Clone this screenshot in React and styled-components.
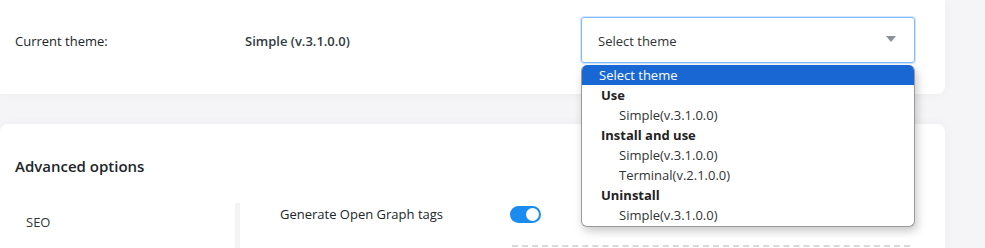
import React from 'react';
import styled, { createGlobalStyle } from 'styled-components';

const GlobalStyle = createGlobalStyle`
  html, body {
    margin: 0;
    padding: 0;
    background: #f5f5f7;
    font-family: "Open Sans", "Noto Sans", sans-serif;
    color: #212529;
  }
`;

const themeGroups = [
  { label: 'Use', items: ['Simple(v.3.1.0.0)'] },
  { label: 'Install and use', items: ['Simple(v.3.1.0.0)', 'Terminal(v.2.1.0.0)'] },
  { label: 'Uninstall', items: ['Simple(v.3.1.0.0)'] },
];

const App = () => {
  return (
    <>
      <GlobalStyle />
      <Page>
        <Main>
          <Card $top>
            <ThemeRow>
              <Label>Current theme:</Label>
              <CurrentValue>Simple (v.3.1.0.0)</CurrentValue>
              <SelectWrap>
                <SelectBox>
                  <span>Select theme</span>
                  <Caret />
                </SelectBox>
                <Menu>
                  <Option $active>Select theme</Option>
                  {themeGroups.map(g => (
                    <React.Fragment key={g.label}>
                      <GroupLabel>{g.label}</GroupLabel>
                      {g.items.map((it, i) => (
                        <Option key={i} $indent>{it}</Option>
                      ))}
                    </React.Fragment>
                  ))}
                </Menu>
              </SelectWrap>
            </ThemeRow>
          </Card>

          <Card>
            <SectionTitle>Advanced options</SectionTitle>
            <Split>
              <SideNav>
                <NavItem>SEO</NavItem>
              </SideNav>
              <Content>
                <SettingRow>
                  <SettingLabel>Generate Open Graph tags</SettingLabel>
                  <Toggle><Knob /></Toggle>
                </SettingRow>
                <Dashed />
              </Content>
            </Split>
          </Card>
        </Main>
        <Aside />
      </Page>
    </>
  );
};

const Page = styled.div`
  display: grid;
  grid-template-columns: 945px 1fr;
  height: 248px;
  overflow: hidden;
`;

const Main = styled.div`
  display: flex;
  flex-direction: column;
  gap: 30px;
`;

const Aside = styled.div`
  background: #f5f5f7;
`;

const Card = styled.div`
  background: #fff;
  border-radius: ${p => (p.$top ? '0 0 8px 0' : '8px 8px 0 0')};
  box-shadow: 0 0 12px rgba(0, 0, 0, 0.04);
  height: ${p => (p.$top ? '94px' : 'auto')};
  flex: ${p => (p.$top ? 'none' : '1')};
  position: relative;
  z-index: ${p => (p.$top ? 2 : 1)};
`;

const ThemeRow = styled.div`
  display: grid;
  grid-template-columns: 230px 336px 334px;
  align-items: center;
  padding: 17px 0 0 15px;
  font-size: 13px;
`;

const Label = styled.div`
  color: #212529;
  padding-top: 2px;
`;

const CurrentValue = styled.div`
  font-weight: 600;
  color: #343a40;
  padding-top: 2px;
`;

const SelectWrap = styled.div`
  position: relative;
`;

const SelectBox = styled.div`
  height: 46px;
  box-sizing: border-box;
  border: 1px solid #80bdff;
  border-radius: 3px;
  box-shadow: 0 0 0 1px rgba(128, 189, 255, 0.35);
  display: flex;
  align-items: center;
  justify-content: space-between;
  padding: 1px 18px 0 16px;
  color: #333;
  font-size: 13px;
`;

const Caret = styled.span`
  width: 0;
  height: 0;
  border-left: 5px solid transparent;
  border-right: 5px solid transparent;
  border-top: 6px solid #8b8f96;
  margin-top: -3px;
`;

const Menu = styled.div`
  position: absolute;
  top: 48px;
  left: 0;
  right: 0;
  background: #fff;
  border: 1px solid #9a9a9a;
  border-top: none;
  border-radius: 6px;
  overflow: hidden;
  box-shadow: 2px 4px 10px rgba(0, 0, 0, 0.22);
  font-size: 13px;
  padding-bottom: 1px;
`;

const Option = styled.div`
  height: 20px;
  line-height: 20px;
  padding-left: ${p => (p.$indent ? '37px' : '17px')};
  background: ${p => (p.$active ? '#1967d2' : 'transparent')};
  color: ${p => (p.$active ? '#fff' : '#333')};
`;

const GroupLabel = styled.div`
  height: 20px;
  line-height: 20px;
  padding-left: 19px;
  font-weight: 700;
  color: #222;
`;

const SectionTitle = styled.div`
  padding: 32px 0 0 15px;
  font-size: 15px;
  font-weight: 600;
  color: #212529;
`;

const Split = styled.div`
  display: grid;
  grid-template-columns: 235px 1fr;
  margin-top: 27px;
`;

const SideNav = styled.div`
  padding: 10px 0 0 26px;
`;

const NavItem = styled.div`
  font-size: 13px;
  color: #333;
`;

const Content = styled.div`
  border-left: 5px solid #f4f4f6;
  padding: 0 30px 0 40px;
  min-height: 60px;
`;

const SettingRow = styled.div`
  display: flex;
  align-items: center;
  padding-top: 2px;
`;

const SettingLabel = styled.div`
  width: 230px;
  font-size: 13px;
  color: #212529;
`;

const Toggle = styled.div`
  width: 31px;
  height: 17px;
  border-radius: 9px;
  background: #1a8cf0;
  display: flex;
  align-items: center;
  justify-content: flex-end;
  padding: 0 2px;
  box-sizing: border-box;
`;

const Knob = styled.div`
  width: 13px;
  height: 13px;
  border-radius: 50%;
  background: #fff;
`;

const Dashed = styled.div`
  margin: 22px 0 0 232px;
  border-top: 2px dashed #d9d9d9;
  width: 398px;
`;

export default App;
